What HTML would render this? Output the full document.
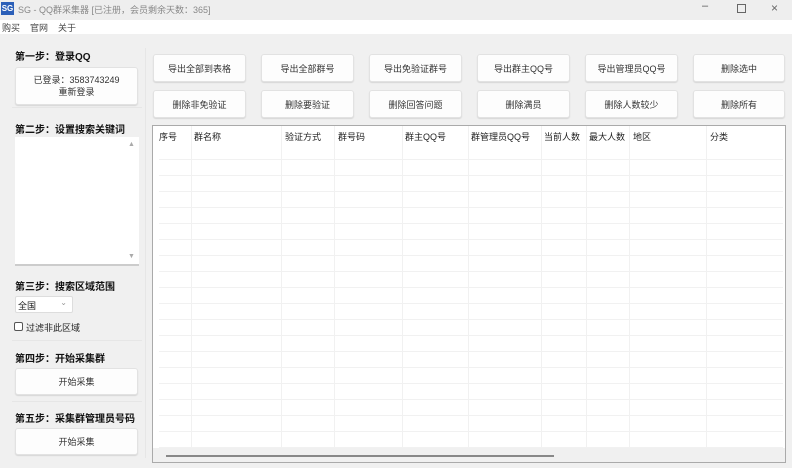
<!DOCTYPE html>
<html><head><meta charset="utf-8"><style>
*{margin:0;padding:0;box-sizing:border-box}
body{width:800px;height:468px;background:#fff;font-family:"Liberation Sans","Noto Sans CJK SC",sans-serif;font-size:9px;color:#222;position:relative;overflow:hidden}
.a{position:absolute}
#title{left:0;top:0;width:792px;height:20px;background:#eeeeee}
#menu{left:0;top:20px;width:792px;height:14px;background:#fff}
#body{left:0;top:34px;width:792px;height:434px;background:#f0f0f0}
.btn{position:absolute;background:#fdfdfd;border:1px solid #e2e2e2;border-radius:3px;box-shadow:0 1px 1px #d6d6d6;text-align:center;font-size:9px;color:#333;display:flex;align-items:center;justify-content:center}
.h{position:absolute;font-weight:bold;font-size:10px;color:#111}
</style></head><body>
<div class="a" id="title"></div>
<div class="a" style="left:1px;top:2px;width:13px;height:13px;background:#2b5fb8;color:#fff;font-size:8px;line-height:13px;text-align:center;font-weight:bold">SG</div>
<div class="a" style="left:18px;top:3px;color:#888;font-size:9px">SG - QQ群采集器 [已注册，会员剩余天数：365]</div>
<div class="a" style="left:702px;top:0;color:#555;font-size:11px">–</div>
<div class="a" style="left:737px;top:4px;width:9px;height:9px;border:1px solid #666"></div>
<div class="a" style="left:771px;top:1px;color:#666;font-size:12px">×</div>
<div class="a" id="menu"></div>
<div class="a" style="left:2px;top:21px;color:#444">购买</div>
<div class="a" style="left:30px;top:21px;color:#444">官网</div>
<div class="a" style="left:58px;top:21px;color:#444">关于</div>
<div class="a" id="body"></div>
<div class="a" style="left:145px;top:48px;width:1px;height:410px;background:#e6e6e6"></div>
<div class="a" style="left:12px;top:107px;width:130px;height:1px;background:#e6e6e6"></div>
<div class="a" style="left:12px;top:340px;width:130px;height:1px;background:#e6e6e6"></div>
<div class="a" style="left:12px;top:401px;width:130px;height:1px;background:#e6e6e6"></div>

<div class="h" style="left:15px;top:48px">第一步：登录QQ</div>
<div class="btn" style="left:15px;top:67px;width:123px;height:38px;flex-direction:column;line-height:12px"><div>已登录：3583743249</div><div>重新登录</div></div>
<div class="h" style="left:15px;top:121px">第二步：设置搜索关键词</div>
<div class="a" style="left:15px;top:137px;width:124px;height:129px;background:#fff;border-bottom:2px solid #ccc"></div>
<div class="a" style="left:128px;top:141px;color:#aaa;font-size:7px">▲</div>
<div class="a" style="left:128px;top:253px;color:#aaa;font-size:7px">▼</div>
<div class="h" style="left:15px;top:278px">第三步：搜索区域范围</div>
<div class="a" style="left:15px;top:296px;width:58px;height:17px;background:#fff;border:1px solid #ddd;border-radius:2px;padding:2px 2px;font-size:9px">全国<span style="position:absolute;right:5px;top:1px;color:#999;font-size:8px">⌄</span></div>
<div class="a" style="left:14px;top:322px;width:9px;height:9px;border:1px solid #555;border-radius:2px;background:#fff"></div>
<div class="a" style="left:26px;top:321px">过滤非此区域</div>
<div class="h" style="left:15px;top:350px">第四步：开始采集群</div>
<div class="btn" style="left:15px;top:368px;width:123px;height:27px">开始采集</div>
<div class="h" style="left:15px;top:410px">第五步：采集群管理员号码</div>
<div class="btn" style="left:15px;top:428px;width:123px;height:27px">开始采集</div>

<div class="btn" style="left:153px;top:54px;width:93px;height:28px">导出全部到表格</div>
<div class="btn" style="left:261px;top:54px;width:93px;height:28px">导出全部群号</div>
<div class="btn" style="left:369px;top:54px;width:93px;height:28px">导出免验证群号</div>
<div class="btn" style="left:477px;top:54px;width:93px;height:28px">导出群主QQ号</div>
<div class="btn" style="left:585px;top:54px;width:93px;height:28px">导出管理员QQ号</div>
<div class="btn" style="left:693px;top:54px;width:92px;height:28px">删除选中</div>
<div class="btn" style="left:153px;top:90px;width:93px;height:28px">删除非免验证</div>
<div class="btn" style="left:261px;top:90px;width:93px;height:28px">删除要验证</div>
<div class="btn" style="left:369px;top:90px;width:93px;height:28px">删除回答问题</div>
<div class="btn" style="left:477px;top:90px;width:93px;height:28px">删除满员</div>
<div class="btn" style="left:585px;top:90px;width:93px;height:28px">删除人数较少</div>
<div class="btn" style="left:693px;top:90px;width:92px;height:28px">删除所有</div>

<div class="a" style="left:152px;top:125px;width:634px;height:338px;background:#fff;border:1px solid #aaa;overflow:hidden">
<svg width="634" height="338" style="position:absolute;left:0;top:0">
<g stroke="#f1f1f1" stroke-width="1">
<line x1="38.5" y1="0" x2="38.5" y2="322"/><line x1="128.5" y1="0" x2="128.5" y2="322"/><line x1="181.5" y1="0" x2="181.5" y2="322"/><line x1="249.5" y1="0" x2="249.5" y2="322"/><line x1="315.5" y1="0" x2="315.5" y2="322"/><line x1="388.5" y1="0" x2="388.5" y2="322"/><line x1="433.5" y1="0" x2="433.5" y2="322"/><line x1="476.5" y1="0" x2="476.5" y2="322"/><line x1="553.5" y1="0" x2="553.5" y2="322"/>
<g id="r">
<line x1="6" y1="33.5" x2="630" y2="33.5"/><line x1="6" y1="49.5" x2="630" y2="49.5"/><line x1="6" y1="65.5" x2="630" y2="65.5"/><line x1="6" y1="81.5" x2="630" y2="81.5"/><line x1="6" y1="97.5" x2="630" y2="97.5"/><line x1="6" y1="113.5" x2="630" y2="113.5"/><line x1="6" y1="129.5" x2="630" y2="129.5"/><line x1="6" y1="145.5" x2="630" y2="145.5"/><line x1="6" y1="161.5" x2="630" y2="161.5"/><line x1="6" y1="177.5" x2="630" y2="177.5"/><line x1="6" y1="193.5" x2="630" y2="193.5"/><line x1="6" y1="209.5" x2="630" y2="209.5"/><line x1="6" y1="225.5" x2="630" y2="225.5"/><line x1="6" y1="241.5" x2="630" y2="241.5"/><line x1="6" y1="257.5" x2="630" y2="257.5"/><line x1="6" y1="273.5" x2="630" y2="273.5"/><line x1="6" y1="289.5" x2="630" y2="289.5"/><line x1="6" y1="305.5" x2="630" y2="305.5"/><line x1="6" y1="321.5" x2="630" y2="321.5"/>
</g></g>
<rect x="0" y="322" width="634" height="16" fill="#f0f0f0"/>
<rect x="13" y="329" width="388" height="2" fill="#888"/>
</svg>
<div class="a" style="left:6px;top:4px">序号</div>
<div class="a" style="left:41px;top:4px">群名称</div>
<div class="a" style="left:132px;top:4px">验证方式</div>
<div class="a" style="left:185px;top:4px">群号码</div>
<div class="a" style="left:252px;top:4px">群主QQ号</div>
<div class="a" style="left:318px;top:4px">群管理员QQ号</div>
<div class="a" style="left:391px;top:4px">当前人数</div>
<div class="a" style="left:436px;top:4px">最大人数</div>
<div class="a" style="left:480px;top:4px">地区</div>
<div class="a" style="left:557px;top:4px">分类</div>
</div>
</body></html>
